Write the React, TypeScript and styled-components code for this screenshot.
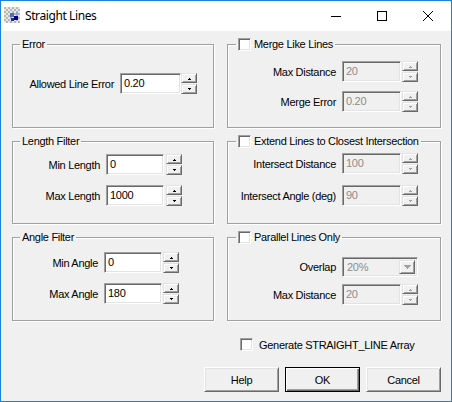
import React from 'react';
import styled, { createGlobalStyle, css } from 'styled-components';

const Global = createGlobalStyle`
  html, body { margin: 0; padding: 0; background: #ffffff; }
  body { font-family: "Liberation Sans", Arial, sans-serif; font-size: 11px; letter-spacing: -0.3px; color: #000; }
  * { box-sizing: border-box; }
`;

const sunken = css`
  border-style: solid;
  border-width: 1px;
  border-color: #a0a0a0 #ffffff #ffffff #a0a0a0;
  box-shadow: inset 1px 1px 0 #696969, inset -1px -1px 0 #e3e3e3;
`;

const raised = css`
  border-style: solid;
  border-width: 1px;
  border-color: #e3e3e3 #696969 #696969 #e3e3e3;
  box-shadow: inset 1px 1px 0 #ffffff, inset -1px -1px 0 #a0a0a0;
`;

const Window = styled.div`
  width: 452px;
  height: 402px;
  border: 1px solid #1883d7;
  background: #f0f0f0;
  display: flex;
  flex-direction: column;
`;

const TitleBar = styled.div`
  flex: none;
  height: 30px;
  background: #ffffff;
  display: flex;
  align-items: center;
`;

const IconBox = styled.div`
  width: 16px;
  height: 16px;
  margin-left: 3px;
  margin-top: -2px;
  display: flex;
`;

const Title = styled.div`
  margin-left: 5px;
  margin-top: -2px;
  font-family: "Segoe UI", "Noto Sans", "Liberation Sans", sans-serif;
  font-size: 12px;
  letter-spacing: -0.4px;
  color: #000;
  flex: 1;
`;

const CaptionButton = styled.div`
  width: 46px;
  height: 29px;
  display: flex;
  align-items: center;
  justify-content: center;
  margin-top: -1px;
`;

const Client = styled.div`
  flex: 1;
  display: flex;
  flex-direction: column;
  padding: 7px 10px 0 11px;
`;

const Groups = styled.div`
  display: grid;
  grid-template-columns: 202px 214px;
  grid-template-rows: 90px 89px 90px;
  column-gap: 13px;
  row-gap: 7px;
`;

const Group = styled.fieldset<{ $pt: number; $pr: number; $gap: number }>`
  margin: 0;
  padding: ${(p) => p.$pt}px ${(p) => p.$pr}px 0 0;
  border: 1px solid #a0a0a0;
  box-shadow: 1px 1px 0 #ffffff, inset 1px 1px 0 #ffffff;
  min-width: 0;
  display: flex;
  flex-direction: column;
  gap: ${(p) => p.$gap}px;
`;

const Legend = styled.legend<{ $ml: number }>`
  margin-left: ${(p) => p.$ml}px;
  padding: 0 2px;
  height: 13px;
  line-height: 13px;
  display: flex;
  align-items: center;
  gap: 3px;
  white-space: nowrap;
`;

const Row = styled.div<{ $h?: number }>`
  display: flex;
  align-items: center;
  justify-content: flex-end;
  height: ${(p) => p.$h ?? 21}px;
`;

const Label = styled.span`
  margin-right: 6px;
  white-space: nowrap;
`;

const Edit = styled.div<{ $w: number; $disabled?: boolean; $gap: number }>`
  ${sunken};
  width: ${(p) => p.$w}px;
  height: 21px;
  margin-right: ${(p) => p.$gap}px;
  padding: 0 0 2px 3px;
  display: flex;
  align-items: center;
  background: ${(p) => (p.$disabled ? '#f0f0f0' : '#ffffff')};
  color: ${(p) => (p.$disabled ? '#8c8c8c' : '#000000')};
`;

const SpinCol = styled.div`
  display: flex;
  flex-direction: column;
  gap: 1px;
`;

const SpinBtn = styled.div`
  ${raised};
  width: 16px;
  height: 10px;
  display: flex;
  align-items: center;
  justify-content: center;
  background: #f0f0f0;
`;

const Combo = styled.div<{ $w: number }>`
  ${sunken};
  width: ${(p) => p.$w}px;
  height: 20px;
  display: flex;
  align-items: stretch;
  background: #f0f0f0;
  color: #8c8c8c;
  padding: 2px;
`;

const ComboText = styled.div`
  flex: 1;
  display: flex;
  align-items: center;
  padding: 0 0 1px 2px;
`;

const ComboBtn = styled.div`
  ${raised};
  width: 16px;
  display: flex;
  align-items: center;
  justify-content: center;
  background: #f0f0f0;
`;

const CheckBox = styled.span`
  ${sunken};
  display: inline-block;
  width: 13px;
  height: 13px;
  background: #ffffff;
  flex: none;
`;

const CheckRow = styled.div`
  margin-top: 17px;
  padding-left: 228px;
  display: flex;
  align-items: center;
  gap: 6px;
  height: 13px;
`;

const ButtonRow = styled.div`
  margin-top: 16px;
  display: flex;
  justify-content: flex-end;
  gap: 6px;
`;

const PushButton = styled.div<{ $default?: boolean }>`
  width: 75px;
  height: 25px;
  display: flex;
  align-items: center;
  justify-content: center;
  background: #f0f0f0;
  border-style: solid;
  border-width: 1px;
  ${(p) =>
    p.$default
      ? css`
          border-color: #000;
          box-shadow: inset 1px 1px 0 #ffffff, inset -1px -1px 0 #696969, inset -2px -2px 0 #a0a0a0;
        `
      : css`
          border-color: #ffffff #696969 #696969 #ffffff;
          box-shadow: inset 1px 1px 0 #e3e3e3, inset -1px -1px 0 #a0a0a0;
        `}
`;

const Arrow = ({ down, disabled }: { down?: boolean; disabled?: boolean }) => (
  <svg width="5" height="3" viewBox="0 0 5 3" shapeRendering="crispEdges" style={{ display: 'block' }}>
    <g fill={disabled ? '#a0a0a0' : '#000'} transform={down ? 'translate(0,3) scale(1,-1)' : undefined}>
      <rect x="2" y="1" width="1" height="1" />
      <rect x="1" y="2" width="3" height="1" />
    </g>
  </svg>
);

const ComboArrow = () => (
  <svg width="7" height="4" viewBox="0 0 7 4" shapeRendering="crispEdges" style={{ display: 'block' }}>
    <g fill="#a0a0a0">
      <rect x="0" y="0" width="7" height="1" />
      <rect x="1" y="1" width="5" height="1" />
      <rect x="2" y="2" width="3" height="1" />
      <rect x="3" y="3" width="1" height="1" />
    </g>
  </svg>
);

const Spinner = ({ disabled }: { disabled?: boolean }) => (
  <SpinCol>
    <SpinBtn>
      <Arrow disabled={disabled} />
    </SpinBtn>
    <SpinBtn>
      <Arrow down disabled={disabled} />
    </SpinBtn>
  </SpinCol>
);

type FieldProps = {
  label: string;
  value: string;
  w: number;
  gap: number;
  disabled?: boolean;
};

const Field = ({ label, value, w, gap, disabled }: FieldProps) => (
  <Row>
    <Label>{label}</Label>
    <Edit $w={w} $gap={gap} $disabled={disabled}>
      {value}
    </Edit>
    <Spinner disabled={disabled} />
  </Row>
);

const AppIcon = () => (
  <svg width="16" height="16" viewBox="0 0 16 16" shapeRendering="crispEdges">
    <rect x="0" y="0" width="16" height="16" fill="#e6e6e6" />
    {[0, 1, 2, 3, 4, 5, 6, 7].map((r) =>
      [0, 1, 2, 3, 4, 5, 6, 7].map((c) =>
        (r + c) % 2 === 0 ? <rect key={`${r}-${c}`} x={c * 2} y={r * 2} width="2" height="2" fill="#b8b8b8" /> : null
      )
    )}
    <rect x="6" y="6" width="4" height="4" fill="#4a6fb8" />
    <rect x="10" y="9" width="4" height="4" fill="#000080" />
    <rect x="7" y="11" width="3" height="3" fill="#1a2f8a" />
    <rect x="12" y="5" width="2" height="3" fill="#8fa3d6" />
  </svg>
);

export default function App() {
  return (
    <>
      <Global />
      <Window>
        <TitleBar>
          <IconBox>
            <AppIcon />
          </IconBox>
          <Title>Straight Lines</Title>
          <CaptionButton>
            <svg width="10" height="10" viewBox="0 0 10 10" shapeRendering="crispEdges">
              <rect x="0" y="5" width="10" height="1" fill="#000" />
            </svg>
          </CaptionButton>
          <CaptionButton>
            <svg width="10" height="10" viewBox="0 0 10 10" shapeRendering="crispEdges">
              <rect x="0.5" y="0.5" width="9" height="9" fill="none" stroke="#000" strokeWidth="1" />
            </svg>
          </CaptionButton>
          <CaptionButton>
            <svg width="10" height="10" viewBox="0 0 10 10">
              <path d="M0 0 L10 10 M10 0 L0 10" stroke="#000" strokeWidth="1" />
            </svg>
          </CaptionButton>
        </TitleBar>
        <Client>
          <Groups>
            <Group $pt={22} $pr={16} $gap={9}>
              <Legend $ml={7}>Error</Legend>
              <Field label="Allowed Line Error" value="0.20" w={61} gap={0} />
            </Group>
            <Group $pt={10} $pr={22} $gap={9}>
              <Legend $ml={8}>
                <CheckBox />
                Merge Like Lines
              </Legend>
              <Field label="Max Distance" value="20" w={59} gap={1} disabled />
              <Field label="Merge Error" value="0.20" w={59} gap={1} disabled />
            </Group>
            <Group $pt={6} $pr={31} $gap={10}>
              <Legend $ml={7}>Length Filter</Legend>
              <Field label="Min Length" value="0" w={58} gap={2} />
              <Field label="Max Length" value="1000" w={58} gap={2} />
            </Group>
            <Group $pt={5} $pr={22} $gap={11}>
              <Legend $ml={8}>
                <CheckBox />
                Extend Lines to Closest Intersection
              </Legend>
              <Field label="Intersect Distance" value="100" w={59} gap={1} disabled />
              <Field label="Intersect Angle (deg)" value="90" w={59} gap={1} disabled />
            </Group>
            <Group $pt={8} $pr={34} $gap={10}>
              <Legend $ml={7}>Angle Filter</Legend>
              <Field label="Min Angle" value="0" w={58} gap={1} />
              <Field label="Max Angle" value="180" w={58} gap={1} />
            </Group>
            <Group $pt={13} $pr={22} $gap={7}>
              <Legend $ml={8}>
                <CheckBox />
                Parallel Lines Only
              </Legend>
              <Row $h={20}>
                <Label>Overlap</Label>
                <Combo $w={76}>
                  <ComboText>20%</ComboText>
                  <ComboBtn>
                    <ComboArrow />
                  </ComboBtn>
                </Combo>
              </Row>
              <Field label="Max Distance" value="20" w={59} gap={1} disabled />
            </Group>
          </Groups>
          <CheckRow>
            <CheckBox />
            <span>Generate STRAIGHT_LINE Array</span>
          </CheckRow>
          <ButtonRow>
            <PushButton>Help</PushButton>
            <PushButton $default>OK</PushButton>
            <PushButton>Cancel</PushButton>
          </ButtonRow>
        </Client>
      </Window>
    </>
  );
}
